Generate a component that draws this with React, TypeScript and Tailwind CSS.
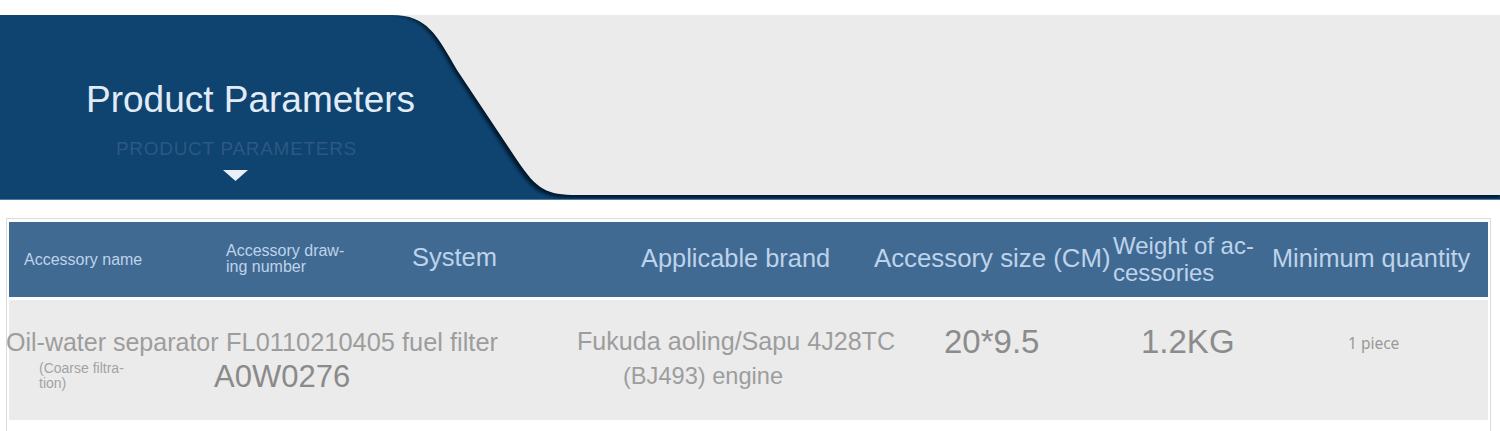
import React from "react";

const font = { fontFamily: '"Liberation Sans", Arial, sans-serif' };

function Banner() {
  return (
    <div className="relative mt-[15px] h-[185px] w-full bg-[#0f4370] overflow-hidden">
      <svg
        className="absolute left-0 top-0"
        width="1500"
        height="185"
        viewBox="0 0 1500 185"
      >
        <defs>
          <filter id="sh" x="-5%" y="-10%" width="110%" height="130%">
            <feGaussianBlur stdDeviation="1.6" />
          </filter>
        </defs>
        <path
          d="M 388 0 C 423 0 433 20 453 55 L 513 147 C 533 177 543 183 573 183 L 1500 183 L 1500 0 Z"
          fill="#06182a"
          opacity="0.9"
          filter="url(#sh)"
        />
        <path
          d="M 392 0 C 427 0 437 20 457 55 L 517 145 C 537 175 547 180 577 180 L 1500 180 L 1500 0 Z"
          fill="#ebebeb"
        />
        <line x1="0" y1="184.5" x2="1500" y2="184.5" stroke="#4f7aa3" strokeWidth="1" />
      </svg>
      <div className="relative flex flex-col pt-[64px]" style={font}>
        <div className="pl-[86px] text-[37px] leading-[42px] text-[#e2ecf7] whitespace-nowrap">
          Product Parameters
        </div>
        <div className="pl-[116px] mt-[17px] text-[19px] leading-[22px] tracking-[0.7px] text-[#2c5883] whitespace-nowrap">
          PRODUCT PARAMETERS
        </div>
        <div className="pl-[223px] mt-[10px]">
          <svg width="25" height="11" viewBox="0 0 25 11">
            <path d="M0 0 L25 0 L12.5 11 Z" fill="#eaf0f7" />
          </svg>
        </div>
      </div>
    </div>
  );
}

function Header() {
  const cell = "flex items-center h-full text-[#bdd3ea]";
  return (
    <div className="flex h-[75px] w-full bg-[#416a93]" style={font}>
      <div className={`${cell} w-[211px] pl-[15px] text-[16px] whitespace-nowrap`}>Accessory name</div>
      <div className={`${cell} w-[180px] pl-[6px] text-[16px] leading-[16px]`}>
        <div className="flex flex-col pb-[2px]">
          <span className="whitespace-nowrap">Accessory draw-</span>
          <span className="whitespace-nowrap">ing number</span>
        </div>
      </div>
      <div className={`${cell} w-[160px] pl-[12px] text-[25.5px] pb-[4px] whitespace-nowrap`}>System</div>
      <div className={`${cell} w-[302px] pl-[81px] text-[25.4px] pb-[2px] whitespace-nowrap`}>Applicable brand</div>
      <div className={`${cell} w-[250px] pl-[12px] text-[25.8px] pb-[2px] whitespace-nowrap`}>Accessory size (CM)</div>
      <div className={`${cell} w-[150px] pl-[1px] text-[24px] leading-[27px]`}>
        <div className="flex flex-col pb-[1px]">
          <span className="whitespace-nowrap">Weight of ac-</span>
          <span className="whitespace-nowrap">cessories</span>
        </div>
      </div>
      <div className={`${cell} w-[226px] pl-[10px] text-[25.3px] pb-[2px] whitespace-nowrap`}>Minimum quantity</div>
    </div>
  );
}

function Row() {
  return (
    <div className="flex h-[120px] w-full bg-[#ebebeb] mt-[3px] text-[#9d9d9d]" style={font}>
      <div className="flex w-[211px] flex-col pt-[28px]">
        <div className="ml-[-3px] text-[25px] leading-[28px] whitespace-nowrap">Oil-water separator</div>
        <div className="pl-[30px] mt-[5px] text-[14px] leading-[15px] text-[#a3a3a3]">
          <div className="whitespace-nowrap">(Coarse filtra-</div>
          <div className="whitespace-nowrap">tion)</div>
        </div>
      </div>
      <div className="flex w-[340px] flex-col pt-[28px]">
        <div className="pl-[6px] text-[25.4px] leading-[28px] whitespace-nowrap">FL0110210405 fuel filter</div>
        <div className="ml-[-6px] mt-[4px] text-[31px] leading-[34px] text-[#8a8a8a] whitespace-nowrap">A0W0276</div>
      </div>
      <div className="flex w-[370px] flex-col pt-[24px] leading-[35px]">
        <div className="pl-[17px] text-[25.1px] whitespace-nowrap">Fukuda aoling/Sapu 4J28TC</div>
        <div className="pl-[63px] text-[23.6px] whitespace-nowrap">(BJ493) engine</div>
      </div>
      <div className="flex w-[182px] flex-col pt-[24px]">
        <div className="pl-[14px] text-[33px] leading-[36px] text-[#8c8c8c] whitespace-nowrap">20*9.5</div>
      </div>
      <div className="flex w-[150px] flex-col pt-[24px]">
        <div className="pl-[29px] text-[33px] leading-[36px] text-[#8c8c8c] whitespace-nowrap">1.2KG</div>
      </div>
      <div className="flex w-[226px] flex-col pt-[33px]">
        <div
          className="pl-[86px] text-[15.5px] leading-[20px] text-[#9a9a9a] whitespace-nowrap"
          style={{ fontFamily: '"Noto Sans", "Open Sans", sans-serif' }}
        >
          1 piece
        </div>
      </div>
    </div>
  );
}

export default function App() {
  return (
    <div className="w-[1500px] h-[431px] bg-white overflow-hidden">
      <Banner />
      <div className="ml-[6px] mt-[18px] w-[1485px] border border-[#dcdcdc] px-[2px] pt-[3px] pb-[20px]">
        <Header />
        <Row />
      </div>
    </div>
  );
}
